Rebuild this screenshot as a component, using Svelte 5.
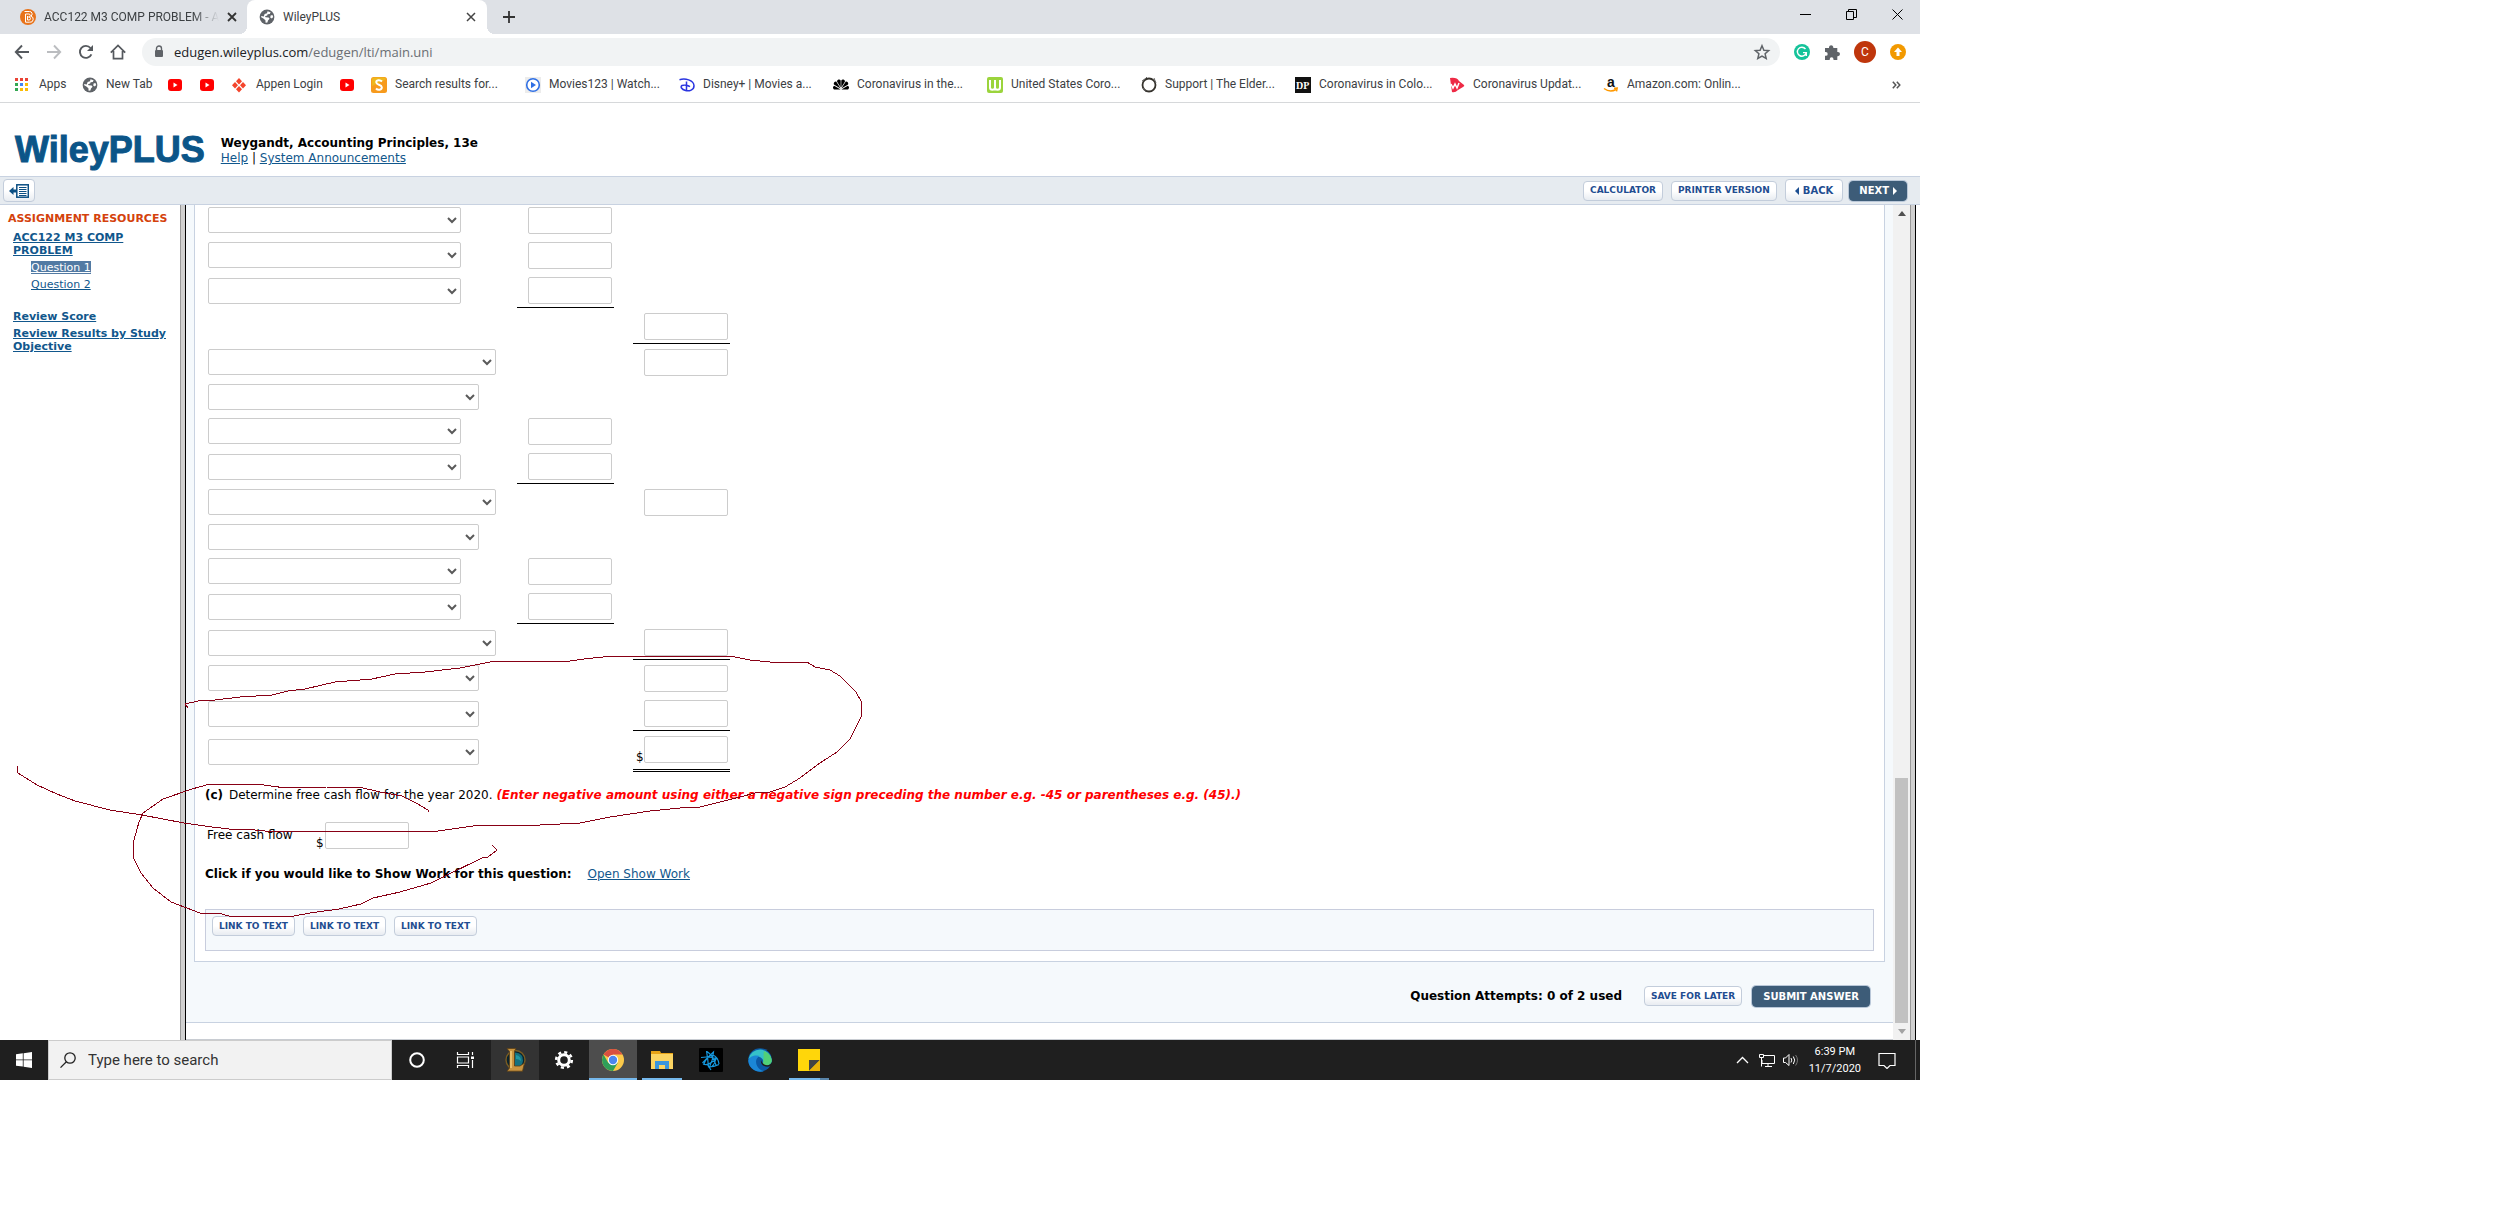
<script>
  const rows = [
    { select: 'narrow', first: true },
    { select: 'narrow', first: true },
    { select: 'narrow', first: true, rule: 'first' },
    { second: true, rule: 'second' },
    { select: 'wide', second: true },
    { select: 'medium' },
    { select: 'narrow', first: true },
    { select: 'narrow', first: true, rule: 'first' },
    { select: 'wide', second: true },
    { select: 'medium' },
    { select: 'narrow', first: true },
    { select: 'narrow', first: true, rule: 'first' },
    { select: 'wide', second: true, rule: 'second' },
    { select: 'medium', second: true },
    { select: 'medium', second: true, rule: 'second' },
    { select: 'medium', second: true, rule: 'total' }
  ];

  const bookmarks = [
    { icon: 'apps', text: 'Apps' },
    { icon: 'globe', text: 'New Tab' },
    { icon: 'youtube', text: '' },
    { icon: 'youtube', text: '' },
    { icon: 'appen', text: 'Appen Login' },
    { icon: 'youtube', text: '' },
    { icon: 'slick', text: 'Search results for...' },
    { icon: 'play', text: 'Movies123 | Watch...' },
    { icon: 'disney', text: 'Disney+ | Movies a...' },
    { icon: 'nbc', text: 'Coronavirus in the...' },
    { icon: 'world', text: 'United States Coro...' },
    { icon: 'elder', text: 'Support | The Elder...' },
    { icon: 'post', text: 'Coronavirus in Colo...' },
    { icon: 'wtag', text: 'Coronavirus Updat...' },
    { icon: 'amazon', text: 'Amazon.com: Onlin...' }
  ];
  const appsDots = ['#ea4335', '#ea4335', '#ea4335', '#34a853', '#4285f4', '#fbbc05', '#34a853', '#fbbc05', '#fbbc05'];
  const tasks = ['cortana', 'view', 'league', 'settings', 'chrome', 'folder', 'battle', 'edge', 'notes'];
</script>

{#snippet globe()}
  <svg class="icon" viewBox="0 0 16 16" aria-hidden="true">
    <circle cx="8" cy="8" r="7.4" fill="#5f6368" />
    <path d="M8.500 2.200 11.600 3.200 10.800 5 8.600 5.200 8.200 6.600 6 7.200 6.600 8.200 9.600 8.400 10.600 9.800 9 11.400 8.400 13.600 6.600 13.800 6.400 11.200 4.400 9.600 2.200 8.200 2.200 7 4.800 7.400 5.600 5 8 4.200Z" fill="#fff" />
    <path d="m11.600 6.600 1.800-.6.800 2-1.400 1.600-1.600-1Z" fill="#fff" />
  </svg>
{/snippet}

<div class="page">
  <div class="desktop">
    <header class="tabs">
      <div class="tab">
        <svg class="icon" viewBox="0 0 16 16" aria-hidden="true">
          <circle cx="8" cy="8" r="8" fill="#e8731a" />
          <path d="M4.500 2.500h5a2.500 2.500 0 0 1 1.300 4.700 3 3 0 0 1-1.300 6H5.500V5h3.300a1.500 1.500 0 0 1 0 3H7.500m1.500 0a1.500 1.500 0 0 1 0 3H7.500V7" fill="none" stroke="#fff" stroke-width="1" />
        </svg>
        <span class="tabtitle faded">ACC122 M3 COMP PROBLEM - A</span>
        <button class="bare" aria-label="Close tab"><svg width="10" height="10" viewBox="0 0 10 10"><path d="m1 1 8 8M9 1 1 9" stroke="#333" stroke-width="1.800" /></svg></button>
      </div>
      <div class="tab active">
        {@render globe()}
        <span class="tabtitle">WileyPLUS</span>
        <button class="bare" aria-label="Close tab"><svg width="10" height="10" viewBox="0 0 10 10"><path d="m1 1 8 8M9 1 1 9" stroke="#444" stroke-width="1.500" /></svg></button>
      </div>
      <button class="bare plus" aria-label="New tab"><svg width="14" height="14" viewBox="0 0 14 14"><path d="M7 1v12M1 7h12" stroke="#333" stroke-width="1.800" /></svg></button>
      <div class="window">
        <button class="bare" aria-label="Minimize"><svg width="11" height="11" viewBox="0 0 11 11"><path d="M0 5.500h11" stroke="#000" /></svg></button>
        <button class="bare" aria-label="Restore"><svg width="11" height="11" viewBox="0 0 11 11"><path d="M.5 2.500h7v8h-7zM2.500 2.500v-2h8v8h-3" fill="none" stroke="#000" /></svg></button>
        <button class="bare" aria-label="Close"><svg width="11" height="11" viewBox="0 0 11 11"><path d="m.5.5 10 10m0-10-10 10" stroke="#000" /></svg></button>
      </div>
    </header>

    <nav class="toolbar">
      <button class="bare" aria-label="Back"><svg class="icon" viewBox="0 0 16 16"><path d="M15 8H2m6-6.500L1.800 8 8 14.500" fill="none" stroke="#55595e" stroke-width="1.900" /></svg></button>
      <button class="bare" aria-label="Forward"><svg class="icon" viewBox="0 0 16 16"><path d="M1 8h13M8 1.500 14.200 8 8 14.500" fill="none" stroke="#bbbdc0" stroke-width="1.900" /></svg></button>
      <button class="bare" aria-label="Reload"><svg class="icon" viewBox="0 0 16 16"><path d="M13.400 10.300A6 6 0 1 1 12.500 4" fill="none" stroke="#55595e" stroke-width="1.900" /><path d="M15 1v6H9z" fill="#55595e" /></svg></button>
      <button class="bare" aria-label="Home"><svg class="icon" viewBox="0 0 16 16"><path d="M.8 8.600 8 1.400l7.200 7.200M3.500 7v7.600h9V7" fill="none" stroke="#55595e" stroke-width="1.700" /></svg></button>
      <div class="address">
        <svg width="10" height="14" viewBox="0 0 10 14" aria-hidden="true"><rect x="1" y="5" width="8" height="7" rx="1" fill="#5f6368" /><path d="M2.500 5V3.500a2.500 2.500 0 0 1 5 0V5" fill="none" stroke="#5f6368" stroke-width="1.400" /></svg>
        <span class="url"><b>edugen.wileyplus.com</b>/edugen/lti/main.uni</span>
        <svg class="icon" viewBox="0 0 16 16" aria-hidden="true"><path d="m8 1.700 1.900 4.500 4.800.4-3.600 3.200 1.100 4.700L8 12l-4.200 2.500 1.100-4.700-3.600-3.200 4.800-.4z" fill="none" stroke="#5f6368" stroke-width="1.500" /></svg>
      </div>
      <div class="extensions">
        <svg class="icon" viewBox="0 0 16 16" aria-hidden="true"><circle cx="8" cy="8" r="8" fill="#15c39a" /><path d="M11.500 5A4.500 4.500 0 1 0 12.300 8.600H9m3.300 0V12" fill="none" stroke="#fff" stroke-width="1.400" /></svg>
        <svg class="icon" viewBox="0 0 16 16" aria-hidden="true"><path d="M1 4h4V3a2.200 2.200 0 0 1 4.300 0v1h4v4h.6a2.100 2.100 0 0 1 0 4.200h-.6V16H9.500v-.8a1.900 1.900 0 0 0-3.800 0v.8H1v-4.200h.8a1.900 1.900 0 0 0 0-3.800H1z" fill="#5f6368" /></svg>
        <span class="avatar">C</span>
        <svg class="icon" viewBox="0 0 16 16" aria-hidden="true"><circle cx="8" cy="8" r="8" fill="#f29900" /><path d="m8 3.500 4 4.500H9.500v4h-3V8H4z" fill="#fff" /></svg>
      </div>
    </nav>

    <nav class="bookmarks">
      {#each bookmarks as mark}
        <a href="#top" aria-label={mark.text || 'YouTube'}>
          {#if mark.icon === 'globe'}
            {@render globe()}
          {:else}
            <svg class="icon" viewBox="0 0 16 16" aria-hidden="true">
              {#if mark.icon === 'apps'}
                {#each appsDots as dot, i}
                  <rect x={(i % 3) * 5} y={1 + Math.floor(i / 3) * 5} width="3" height="3" fill={dot} />
                {/each}
              {:else if mark.icon === 'youtube'}
                <rect y="2" width="14" height="12" rx="3" fill="#f00" /><path d="m5.500 5.500 4 2.500-4 2.500z" fill="#fff" />
              {:else if mark.icon === 'appen'}
                <path d="m7 1 3 3.200-3 3.200-3-3.200zM3 5l3 3.200-3 3.200L0 8.200zM11 5l3 3.200-3 3.200-3-3.200zM7 9l3 3.200-3 3.200-3-3.200z" fill="#f4452c" />
              {:else if mark.icon === 'slick'}
                <rect width="16" height="16" rx="2.500" fill="#f79a1c" /><path d="M1 3a2 2 0 0 1 2-2.500h10a2 2 0 0 1 2 2L1 9z" fill="#eeb71d" /><path d="M11 4.500C9 2.500 5 3 5.300 5.500 5.600 8 10.700 7.500 10.800 10.300 10.900 13 7 13.500 5 11.500" fill="none" stroke="#fff" stroke-width="2" />
              {:else if mark.icon === 'play'}
                <rect width="16" height="16" fill="#ececec" /><circle cx="8" cy="8" r="6.300" fill="#fff" stroke="#2f6fe4" stroke-width="1.600" /><path d="m6 4.800 5 3.200-5 3.200z" fill="#2f6fe4" />
              {:else if mark.icon === 'disney'}
                <path d="M.5 2.800C6 1 14.500 3 15 8.500c.3 4.500-5 6-8.500 5C2.500 12.500 1 9.500 3 8.500c2-.8 6 0 8 1.200M7.500 4.500v9" fill="none" stroke="#2a35e0" stroke-width="1.500" />
              {:else if mark.icon === 'nbc'}
                <path d="M7.600 12.500 1 12.400a2 2 0 0 1 .2-3.600zM7.600 11.500.9 7.400A2.100 2.100 0 0 1 3.200 4.600zM7.700 10.500 4 4.500a2 2 0 0 1 3.700-1zM8.300 10.500V3.500a2 2 0 0 1 3.700 1zM8.400 11.500l4.400-6.900a2.100 2.100 0 0 1 2.300 2.800zM8.400 12.500l6.400-3.700a2 2 0 0 1 .2 3.600z" fill="#000" />
              {:else if mark.icon === 'world'}
                <rect width="16" height="16" rx="2" fill="#9bd43c" /><path d="M3 3v7.500q0 2.300 2.400 2.300T8 10.500V3v7.500q0 2.300 2.500 2.300T13 10.500V3" fill="none" stroke="#fff" stroke-width="2" />
              {:else if mark.icon === 'elder'}
                <circle cx="8" cy="8" r="6.500" fill="#fff" stroke="#35322c" stroke-width="1.800" /><path d="m1 4 3-2 2-2m7 1 2 5M2 11l3 4" stroke="#666" />
              {:else if mark.icon === 'post'}
                <rect width="16" height="16" fill="#111" /><text x="1" y="12" class="posttext">DP</text>
              {:else if mark.icon === 'wtag'}
                <path d="M1 1q7-1 9 3l5 4q1 1-1 2l-5 3q-3 3-6 2z" fill="#ee2a45" /><path d="m2 7 2 4 2-4 2 4 2-5" fill="none" stroke="#fff" stroke-width="1.500" />
              {:else}
                <text x="4" y="10" class="amazontext">a</text><path d="M1 11.500q6 4.500 12 1m-2-1.300 3.200-.2-.7 3.400" fill="none" stroke="#f90" stroke-width="1.500" />
              {/if}
            </svg>
          {/if}
          <span>{mark.text}</span>
        </a>
      {/each}
      <button class="bare more" aria-label="More bookmarks"><svg width="9" height="8" viewBox="0 0 9 8"><path d="m.8.8 3 3.200-3 3.200m4-6.400 3 3.200-3 3.200" fill="none" stroke="#555" stroke-width="1.500" /></svg></button>
    </nav>

    <section class="brand" id="top">
      <span class="logo">WileyPLUS</span>
      <div class="book">
        <strong>Weygandt, Accounting Principles, 13e</strong>
        <p><a href="#help">Help</a> | <a href="#news">System Announcements</a></p>
      </div>
    </section>

    <div class="actions">
      <button class="pill tall collapse" aria-label="Hide menu"><svg width="20" height="14" viewBox="0 0 20 14"><path d="M0 7l4.500-4v2.500H8v3H4.500V11z" fill="#0b4f83" /><rect x="7.800" y=".8" width="11.500" height="12.400" fill="#fff" stroke="#0b4f83" stroke-width="1.500" /><path d="M10 3.500h7.500M10 5.500h7.500M10 7.500h7.500M10 9.500h7.500M10 11.500h7.500" stroke="#0b4f83" /></svg></button>
      <button class="pill first">CALCULATOR</button>
      <button class="pill">PRINTER VERSION</button>
      <button class="pill tall back"><svg width="4" height="8" viewBox="0 0 4 8" aria-hidden="true"><path d="M4 0v8L0 4z" fill="#1d4f91" /></svg>BACK</button>
      <button class="pill dark">NEXT<svg width="4" height="8" viewBox="0 0 4 8" aria-hidden="true"><path d="M0 0v8l4-4z" fill="#fff" /></svg></button>
    </div>

    <div class="frames">
      <aside>
        <h2>ASSIGNMENT RESOURCES</h2>
        <a class="item" href="#problem">ACC122 M3 COMP PROBLEM</a>
        <a class="sub current" href="#q1">Question 1</a>
        <a class="sub" href="#q2">Question 2</a>
        <a class="item spaced" href="#score">Review Score</a>
        <a class="item" href="#results">Review Results by Study Objective</a>
      </aside>
      <div class="divider"></div>
      <main>
        <div class="surface">
          <div class="question">
            <table>
              <tbody>
                {#each rows as row, i}
                  <tr class={row.rule}>
                    <td class="account">
                      {#if row.select}
                        <select class={row.select} aria-label={`Account ${i + 1}`}><option></option></select>
                      {/if}
                    </td>
                    <td class="amount">
                      {#if row.first}
                        <div class={['entry', row.rule === 'first' && 'ruled']}><input type="text" aria-label={`Amount ${i + 1}`} /></div>
                      {/if}
                    </td>
                    <td class="amount last">
                      {#if row.second}
                        <div class={['entry', row.rule === 'second' && 'ruled', row.rule === 'total' && 'doubled']}>
                          {#if row.rule === 'total'}<span>$</span>{/if}<input type="text" aria-label={`Total ${i + 1}`} />
                        </div>
                      {/if}
                    </td>
                  </tr>
                {/each}
              </tbody>
            </table>
            <p class="part"><b>(c)</b> Determine free cash flow for the year 2020. <em>(Enter negative amount using either a negative sign preceding the number e.g. -45 or parentheses e.g. (45).)</em></p>
            <div class="flow">
              <label for="fcf">Free cash flow</label>
              <span>$</span>
              <input id="fcf" type="text" />
            </div>
            <p class="work"><b>Click if you would like to Show Work for this question:</b> <a href="#work">Open Show Work</a></p>
            <div class="links">
              <button class="pill">LINK TO TEXT</button>
              <button class="pill">LINK TO TEXT</button>
              <button class="pill">LINK TO TEXT</button>
            </div>
          </div>
          <div class="submit">
            <b>Question Attempts: 0 of 2 used</b>
            <button class="pill">SAVE FOR LATER</button>
            <button class="pill dark large">SUBMIT ANSWER</button>
          </div>
        </div>
      </main>
      <div class="scroll">
        <svg width="8" height="5" viewBox="0 0 8 5" aria-hidden="true"><path d="M4 0l4 5H0z" fill="#505050" /></svg>
        <div class="thumb"></div>
        <svg width="8" height="5" viewBox="0 0 8 5" aria-hidden="true"><path d="M0 0h8L4 5z" fill="#a3a3a3" /></svg>
      </div>
      <div class="divider right"></div>
    </div>

    <footer class="taskbar">
      <button class="bare start" aria-label="Start"><svg class="icon" viewBox="0 0 16 16"><path d="M0 2.300 6.800 1.300v6.200H0zM7.600 1.200 16 0v7.500H7.600zM0 8.300h6.800v6.300L0 13.700zM7.600 8.300H16V16l-8.400-1.200z" fill="#fff" /></svg></button>
      <label class="search">
        <svg class="icon" viewBox="0 0 16 16" aria-hidden="true"><circle cx="10" cy="6" r="5.200" fill="none" stroke="#222" stroke-width="1.300" /><path d="M6.400 9.800.5 15.600" stroke="#222" stroke-width="1.300" /></svg>
        <input type="text" placeholder="Type here to search" aria-label="Search" />
      </label>
      {#each tasks as task}
        <button class={['task', task]} aria-label={task}>
          <svg width="24" height="24" viewBox="0 0 24 24">
            {#if task === 'cortana'}
              <circle cx="12" cy="12" r="6.800" fill="none" stroke="#fff" stroke-width="2" />
            {:else if task === 'view'}
              <path d="M3.500 4v2.500h11V4M3.500 20v-2.500h11V20M3.500 9h11v6h-11zM18.500 4v3M18.500 12v8" fill="none" stroke="#fff" stroke-width="1.200" /><path d="M17 8.500h3v2.500h-3z" fill="#fff" />
            {:else if task === 'league'}
              <circle cx="12.500" cy="12" r="9.500" fill="#0a2430" stroke="#7a5c22" stroke-width="1.400" /><path d="M12 4.500q8.500.5 8 8.500-.5 3.500-2.500 5H12z" fill="#14717f" /><path d="M13 7q5 1 5 6-2-2-5-2z" fill="#2298a3" /><path d="M4 .5h9l-1.500 2.500V18H17l4.500-3-2 8.200H4L6.500 20V3.500z" fill="#c99440" stroke="#5b4016" stroke-width=".8" /><path d="M8 3v17" stroke="#f0cd7a" stroke-width="1.500" />
            {:else if task === 'settings'}
              <circle cx="12" cy="12" r="5.300" fill="none" stroke="#fff" stroke-width="3" /><circle cx="12" cy="12" r="7.800" fill="none" stroke="#fff" stroke-width="2.600" stroke-dasharray="3.060 3.060" />
            {:else if task === 'chrome'}
              <circle cx="12" cy="12" r="11" fill="#fbc94a" /><path d="M12 12 2.500 6.500A11 11 0 0 1 21.500 6.500H12z" fill="#d94f40" /><path d="M2.500 6.500A11 11 0 0 0 12 23l4.800-8.200L7.200 14.800z" fill="#2f9e59" /><circle cx="12" cy="12" r="5.200" fill="#fff" /><circle cx="12" cy="12" r="4.200" fill="#4c86f0" />
            {:else if task === 'folder'}
              <path d="M1 3h9l1 2h12v15H1z" fill="#e8a317" /><path d="M1 6h22v15H1z" fill="#fcd462" /><path d="M5 13h14v8h-4v-4H9v4H5z" fill="#3a96dd" />
            {:else if task === 'battle'}
              <rect width="24" height="24" rx="1" fill="#000" /><path d="M7.500 3q1.500 8.500 2 16Q15 19 20 16.500M8 3.500q5 3 9 13.500M2 9.500q8-1.500 17 1.500M3.500 15Q8 10 14.500 4q-.5 8-4 15M4 16q6 2.500 13-6M5 16q3-8 9-9 5 2 6 9M10 19q5 1 7-9M8 16q2 3 4 6" fill="none" stroke="#1597dd" stroke-width="1.200" />
            {:else if task === 'edge'}
              <circle cx="12" cy="12" r="11.800" fill="#0c59a4" /><path d="M.5 11A11.800 11.800 0 0 1 23.800 12c0 4-3 5.500-6 5.500-4 0-3-2-2.500-4C15.500 9 8 6 .5 11z" fill="#35c1c9" /><path d="M16 3a11.800 11.800 0 0 1 7.800 9c0 4-3 5.500-6 5.500-4 0-3-2-2.500-4 .8-4-.3-8 .7-10.500z" fill="#5bd65b" opacity=".75" /><path d="M.3 13C.8 8 8 6.500 12 8c-5 2-5 8-1.500 12 1.600 1.900 4 3 5.500 3A11.800 11.800 0 0 1 .3 13z" fill="#1b87d6" /><path d="M13 12c-1 5 4 8 10 6l1.500-1v-3l-2 2c-3 2.500-8 1-9.500-4z" fill="#1f1f1f" />
            {:else}
              <path d="M1 1h22v22H1z" fill="#ffd60a" /><path d="M12 23V12h11z" fill="#444" /><path d="M12 23 23 12v11z" fill="#eab308" />
            {/if}
          </svg>
        </button>
      {/each}
      <div class="tray">
        <svg width="13" height="8" viewBox="0 0 13 8" aria-hidden="true"><path d="m1 7 5.500-5.500L12 7" fill="none" stroke="#fff" stroke-width="1.300" /></svg>
        <svg class="icon" viewBox="0 0 16 16" aria-hidden="true"><path d="M5 3.500h10.500v8H3V8M9 12v3M6 14.500h7M.5 2.500h4v3h-4zM2.500 5.500v9" fill="none" stroke="#fff" /></svg>
        <svg class="icon" viewBox="0 0 16 16" aria-hidden="true"><path d="M.5 6v4.500h2l3.500 3v-11L2.500 6z" fill="none" stroke="#fff" /><path d="M8 6q1.500 2 0 4.500M10.300 4.500q2.800 3.500 0 7.500" fill="none" stroke="#fff" /><path d="M12.600 3q3.800 5 0 10.500" fill="none" stroke="#777" /></svg>
        <time>6:39 PM<br />11/7/2020</time>
        <svg width="18" height="18" viewBox="0 0 18 18" aria-hidden="true"><path d="M1 2.500h16v12h-5l-3 3-3-3H1z" fill="none" stroke="#fff" stroke-width="1.200" /></svg>
      </div>
    </footer>

    <svg class="ink" width="900" height="940" viewBox="0 0 900 940" aria-hidden="true">
      <path d="M188 708 185 704 198 701 215 700 240 697 272 695 288 691 305 689 335 682 372 679 395 674 425 672 460 668 480 664 495 661 570 661 584 659 612 656 730 656 750 660 770 662 807 662 815 667 830 670 840 676 856 692 861 701 861 717 856 727 850 739 837 752 820 763 800 778 785 787 770 792 755 793 740 797 700 807 680 808 650 811 610 817 595 820 580 823 540 825 480 825 438 831 265 831 245 829 229 829 212 827 184 823 142 815 110 810 75 801 57 794 37 785 18 773 17 766" />
      <path d="M429 812 428 810 416 803 402 796 380 792 359 787 327 787 286 788 256 784 210 784 192 789 163 799 143 813 139 822 134 840 133 857 141 873 153 888 171 902 200 913 218 913 229 916 294 916 310 913 339 909 361 904 373 898 400 892 431 883 445 876 482 858 488 857 497 850 492 845" />
    </svg>
  </div>
</div>

<style>
  :global(body) { margin: 0; background: #fff; }
  .page { display: grid; grid-template-columns: 240fr 73fr; font-family: "DejaVu Sans", sans-serif; font-size: 12px; line-height: 15px; color: #000; }
  .page *, .page :global(*) { box-sizing: border-box; }
  .desktop { position: relative; min-width: 0; }
  .icon { width: 16px; height: 16px; flex: none; display: block; overflow: visible; }
  .bare { border: 0; padding: 0; background: none; display: flex; align-items: center; justify-content: center; }
  a { color: #11578c; }

  .tabs { display: flex; height: 34px; background: #dee1e6; font-family: Roboto, sans-serif; color: #3c4043; }
  .tab { display: flex; align-items: center; width: 247px; padding: 0 10px 0 20px; gap: 8px; }
  .tab.active { position: relative; width: 240px; background: #fff; border-radius: 8px 8px 0 0; padding: 0 11px 0 12px; }
  .active::before, .active::after { content: ""; position: absolute; bottom: 0; width: 8px; height: 8px; }
  .active::before { left: -8px; background: radial-gradient(circle at 0 0, #dee1e6 8px, #fff 8px); }
  .active::after { right: -8px; background: radial-gradient(circle at 100% 0, #dee1e6 8px, #fff 8px); }
  .tabtitle { flex: 1; white-space: nowrap; }
  .faded { mask-image: linear-gradient(to right, #000 85%, transparent); }
  .plus { width: 44px; }
  .window { display: flex; margin-left: auto; }
  .window button { width: 46px; height: 29px; }

  .toolbar { display: flex; align-items: center; height: 36px; padding: 0 14px; gap: 16px; }
  .address { flex: 1; display: flex; align-items: center; gap: 10px; height: 28px; padding: 0 10px 0 12px; margin-right: -2px; border-radius: 14px; background: #f1f3f4; font-family: "Open Sans", sans-serif; font-size: 13px; color: #6a6e73; }
  .url { flex: 1; }
  .url b { font-weight: 400; color: #202124; }
  .extensions { display: flex; align-items: center; gap: 14px; }
  .avatar { width: 22px; height: 22px; border-radius: 50%; background: #bf360c; color: #fff; text-align: center; line-height: 22px; font-family: Roboto, sans-serif; }

  .bookmarks { display: grid; grid-template-columns: 67px 86px 32px 32px 108px 31px repeat(9, 154px) 1fr; align-items: center; height: 33px; padding: 0 19px 3px 15px; border-bottom: 1px solid #d6d8da; font-family: Roboto, sans-serif; }
  .bookmarks a { display: flex; align-items: center; gap: 8px; color: #3c4043; text-decoration: none; white-space: nowrap; }
  .more { justify-self: end; }
  .posttext { font: bold 10px "Liberation Serif", serif; fill: #fff; }
  .amazontext { font: bold 14px "Liberation Sans", sans-serif; fill: #111; }

  .brand { display: flex; align-items: flex-start; height: 73px; padding: 32px 15px 0; gap: 16px; }
  .logo { font: bold 36px/30px "Liberation Sans", sans-serif; color: #0b5588; -webkit-text-stroke: 1px #0b5588; }
  .book { padding-top: 1px; }
  .brand p { margin: 0; }
  .brand strong { display: block; }

  .actions { display: flex; align-items: center; height: 29px; padding: 0 13px 0 3px; background: #e6ebf0; border: solid #c8d2e1; border-width: 1px 0; }
  .pill { display: flex; align-items: center; justify-content: center; gap: 4px; height: 20px; padding: 0 6px 1px; border: 1px solid #c3cddb; border-radius: 4px; background: linear-gradient(#fff 50%, #e8ecf1); color: #1f4d91; font: bold 9px "DejaVu Sans", sans-serif; white-space: nowrap; }
  .pill.tall { height: 23px; font-size: 10px; padding: 0 9px; }
  .pill.collapse { padding: 0 5px; }
  .pill.dark { background: #3d5c78; border-color: #3d5c78; color: #fff; font-size: 10px; box-shadow: 0 0 0 1px #b9c7d8; }
  .pill.large { padding: 0 10px; height: 21px; }
  .actions .pill.first { margin-left: auto; }
  .actions .pill + .pill { margin-right: 8px; }
  .actions .pill.back { margin-right: 6px; }
  .actions .pill.dark { margin-right: 0; padding: 0 9px; }

  .frames { display: flex; }
  aside { width: 180px; flex: none; padding: 7px 8px; font-size: 11px; line-height: 13px; white-space: nowrap; }
  h2 { margin: 0 0 6px; font-size: 11px; line-height: 13px; color: #d4420c; }
  aside a { display: block; width: fit-content; }
  .item { margin-left: 5px; max-width: 154px; white-space: normal; font-weight: 700; margin-bottom: 4px; }
  .sub { margin: 0 0 4px 23px; }
  .current { background: #527aa3; color: #fff; }
  .item.spaced { margin-top: 19px; }
  .divider { width: 6px; flex: none; background: #d0d0d0; border-left: 1px solid #999; border-right: 1px solid #000; }
  .divider.right { margin-right: 4px; }
  main { flex: 1; min-width: 0; border-bottom: 1px solid #c8ccd2; padding-bottom: 16px; }
  .surface { background: #f5f9fc; border-bottom: 1px solid #c8d2e1; padding: 0 8px; }
  .question { background: #fff; border: solid #c8d2e1; border-width: 0 1px 1px; padding: 2px 10px 10px; }
  table { border-collapse: collapse; margin-left: 3px; }
  td { padding: 0; vertical-align: top; }
  .account { width: 309px; padding-bottom: 8px; }
  .first .account, .second .account { padding-top: 1px; }
  .total .account { padding-top: 3px; }
  .amount { width: 97px; }
  .amount.last { width: 116px; padding-left: 19px; }
  select { display: block; height: 26px; border: 1px solid #ccc; border-radius: 2px; background: #fff; color: #5a5a5a; font-size: 12px; }
  .narrow { width: 253px; }
  .medium { width: 271px; }
  .wide { width: 288px; }
  input { display: block; width: 84px; height: 27px; border: 1px solid #ccc; border-radius: 2px; background: #fff; }
  .entry { display: flex; justify-content: flex-end; align-items: flex-end; padding-right: 2px; margin-bottom: 8px; }
  .entry span { width: 8px; line-height: 12px; }
  .ruled { padding-bottom: 3px; border-bottom: 1px solid #000; margin-bottom: 5px; }
  .doubled { padding-bottom: 6px; border-bottom: 3px double #000; margin-bottom: 4px; }
  p { margin: 0; }
  .part { padding-top: 12px; }
  .part b { margin-right: 2px; }
  em { color: #f00; font-weight: 700; }
  .flow { display: flex; align-items: flex-end; padding: 19px 0 0 2px; }
  .flow label { width: 109px; padding-bottom: 6px; }
  .flow span { width: 9px; line-height: 12px; }
  .work { padding: 18px 0 27px; }
  .work a { margin-left: 12px; }
  .links { display: flex; gap: 8px; padding: 6px 6px 14px; background: #f5f9fc; border: 1px solid #c8cddd; }
  .submit { display: flex; align-items: center; justify-content: flex-end; height: 60px; padding: 8px 15px 0 0; }
  .submit b { margin-right: 22px; }
  .submit .large { margin-left: 10px; }
  .scroll { width: 17px; flex: none; display: flex; flex-direction: column; align-items: center; background: #f1f1f1; padding: 6px 0; }
  .thumb { width: 13px; height: 245px; margin: auto 0 6px; background: #c1c1c1; }

  .taskbar { display: flex; height: 40px; background: #1f1f1f; color: #fff; gap: 1px; }
  .start { width: 47px; }
  .search { display: flex; align-items: center; width: 344px; padding-left: 11px; gap: 12px; background: #f2f2f2; border: 1px solid #ccc; }
  .search input { flex: 1; border: 0; padding: 0; background: none; font: 15px Roboto, sans-serif; }
  .search input::placeholder { color: #333; }
  .task { width: 48px; padding: 0; border: 0; background: none; display: flex; align-items: center; justify-content: center; }
  .league { background: #333; }
  .chrome { background: linear-gradient(#76b9ed, #76b9ed) bottom / 100% 2px no-repeat #4d4d4d; }
  .folder { background: linear-gradient(#76b9ed, #76b9ed) bottom / 40px 2px no-repeat; }
  .notes { background: linear-gradient(to right, #76b9ed 31px, #5a86ab 31px) bottom / 40px 2px no-repeat; }
  .tray { display: flex; align-items: center; gap: 10px; margin-left: auto; padding-right: 19px; margin-right: 4px; border-right: 1px solid #666; font-family: Roboto, sans-serif; font-size: 11px; line-height: 17px; text-align: center; }
  .tray .icon + .icon { margin-left: -2px; }
  .tray time { margin-right: 7px; }

  .ink { position: absolute; left: 0; top: 0; pointer-events: none; }
  .ink path { fill: none; stroke: #880015; stroke-width: 1; shape-rendering: crispEdges; }
</style>
